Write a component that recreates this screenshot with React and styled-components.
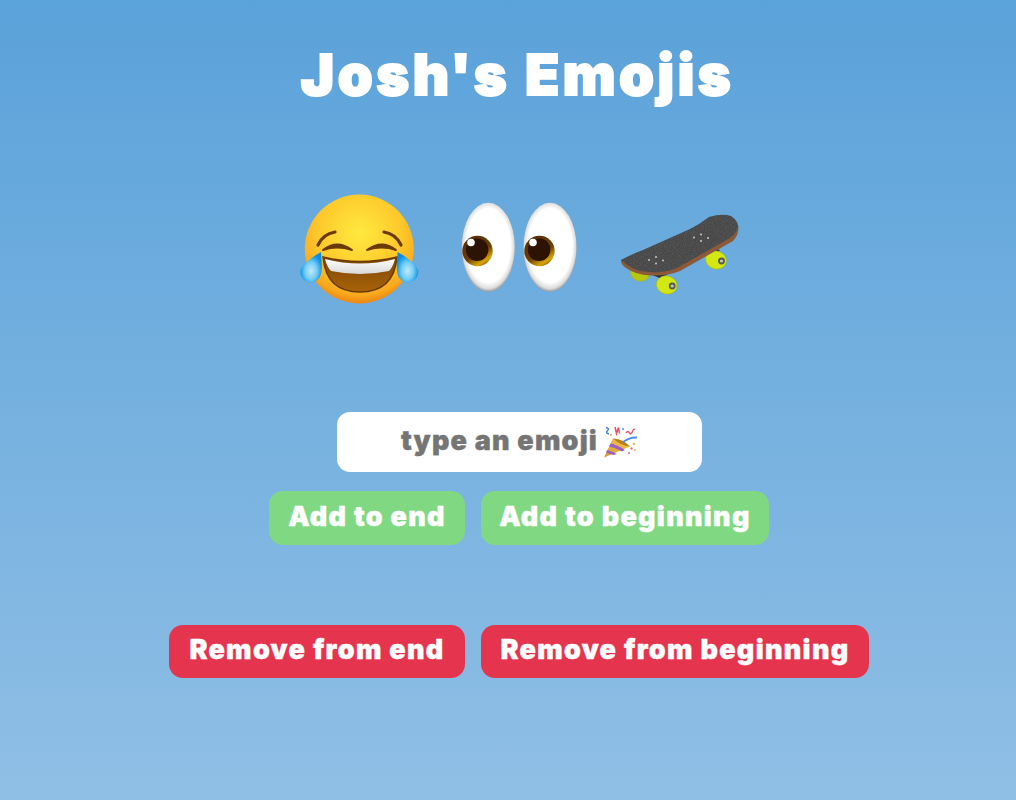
import React from "react";
import styled, { createGlobalStyle } from "styled-components";

const Global = createGlobalStyle`
  html, body { margin: 0; padding: 0; }
  body { font-family: "Inter", "Noto Sans", sans-serif; }
`;

const Page = styled.main`
  box-sizing: border-box;
  height: 800px;
  overflow: hidden;
  background: linear-gradient(180deg, #5aa2da 0%, #90bfe5 100%);
  display: flex;
  flex-direction: column;
  align-items: center;
`;

const Title = styled.h1`
  margin: 40px 0 0 19px;
  height: 70px;
  text-align: center;
  color: #fff;
  font-family: "Inter", sans-serif;
  font-weight: 900;
  font-size: 56px;
  line-height: 70px;
  letter-spacing: 3.5px;
  white-space: nowrap;
  -webkit-text-stroke: 2px #fff;
`;

const EmojiRow = styled.section`
  margin: 80px 0 0 24px;
  display: flex;
  gap: 40px;
  height: 120px;
`;

const EmojiArt = styled.svg`
  width: 120px;
  height: 120px;
  overflow: visible;
  display: block;
`;

const InputBox = styled.div`
  margin: 102px 0 0 23px;
  width: 365px;
  height: 60px;
  background: #fff;
  border-radius: 13px;
  display: flex;
  align-items: center;
  justify-content: center;
  gap: 4px;
  color: #757575;
  font-weight: 900;
  font-size: 27px;
  letter-spacing: 1.2px;
  -webkit-text-stroke: 0.4px #757575;
`;

const InputText = styled.span`
  padding-bottom: 4px;
`;

const Popper = styled.svg`
  width: 36px;
  height: 36px;
  display: block;
`;

const ButtonRow = styled.div`
  display: flex;
  gap: 16px;
  margin: ${(p) => p.$top}px 0 0 22px;
`;

const ActionButton = styled.button`
  box-sizing: border-box;
  width: ${(p) => p.$width}px;
  height: ${(p) => p.$height}px;
  padding: 0 0 4px;
  border: 0;
  border-radius: 14px;
  background: ${(p) => p.$bg};
  color: #fff;
  font-family: "Inter", sans-serif;
  font-weight: 900;
  font-size: 27px;
  letter-spacing: 1.3px;
  -webkit-text-stroke: 0.4px #fff;
  white-space: nowrap;
`;

const Laugh = () => (
  <EmojiArt viewBox="300 190 120 120" role="img" aria-label="laughing with tears">
    <defs>
      <radialGradient id="face" cx="50%" cy="35%" r="64%">
        <stop offset="0" stopColor="#ffe93f" />
        <stop offset="0.6" stopColor="#fdc92a" />
        <stop offset="0.9" stopColor="#f9a81d" />
        <stop offset="1" stopColor="#ee8a14" />
      </radialGradient>
      <radialGradient id="tear" cx="50%" cy="62%" r="55%">
        <stop offset="0" stopColor="#bfe9fb" />
        <stop offset="0.5" stopColor="#76cdf6" />
        <stop offset="0.85" stopColor="#1f9fea" />
        <stop offset="1" stopColor="#0c8de3" />
      </radialGradient>
      <linearGradient id="mouth" x1="0" y1="0" x2="0" y2="1">
        <stop offset="0" stopColor="#7a4405" />
        <stop offset="1" stopColor="#a96408" />
      </linearGradient>
      <linearGradient id="teeth" x1="0" y1="0" x2="0" y2="1">
        <stop offset="0" stopColor="#ffffff" />
        <stop offset="1" stopColor="#d8d8d8" />
      </linearGradient>
    </defs>
    <circle cx="359.3" cy="249" r="54.5" fill="url(#face)" />
    <path d="M318 245 Q323 234 335 232" fill="none" stroke="#6b3a06" strokeWidth="3.2" strokeLinecap="round" />
    <path d="M384 232 Q396 234 401 245" fill="none" stroke="#6b3a06" strokeWidth="3.2" strokeLinecap="round" />
    <path d="M323 250 Q337 239 352 250 Q337 245 323 250Z" fill="#6b3a06" stroke="#6b3a06" strokeWidth="2" strokeLinejoin="round" />
    <path d="M367 250 Q382 239 396 250 Q382 245 367 250Z" fill="#6b3a06" stroke="#6b3a06" strokeWidth="2" strokeLinejoin="round" />
    <path d="M323 257 Q360 266 397 257 Q394 292 360 292 Q326 292 323 257Z" fill="url(#mouth)" stroke="#6b3a06" strokeWidth="1.5" />
    <path d="M325 259 Q360 268 395 259 Q393 267 389 271 Q360 277 331 271 Q327 267 325 259Z" fill="url(#teeth)" />
    <path d="M321 252 C321.5 262 323 270 320 277 A10.5 10.5 0 0 1 300.5 270 C303 264 312 257 321 252Z" fill="url(#tear)" />
    <path d="M397.6 252 C397.1 262 395.6 270 398.6 277 A10.5 10.5 0 0 0 418.1 270 C415.6 264 406.6 257 397.6 252Z" fill="url(#tear)" />
  </EmojiArt>
);

const Eye = ({ cx, ix }) => (
  <g>
    <ellipse cx={cx} cy="247.3" rx="26.6" ry="44.5" fill="url(#sclera)" />
    <circle cx={ix} cy="251" r="15.2" fill="url(#iris)" />
    <circle cx={ix - 0.4} cy="249.8" r="11.3" fill="#2d1303" />
    <circle cx={ix - 6.5} cy="242.5" r="3.8" fill="#ffffff" />
  </g>
);

const Eyes = () => (
  <EmojiArt viewBox="460 190 120 120" role="img" aria-label="eyes">
    <defs>
      <radialGradient id="sclera" cx="50%" cy="48%" r="52%">
        <stop offset="0" stopColor="#ffffff" />
        <stop offset="0.8" stopColor="#ffffff" />
        <stop offset="0.93" stopColor="#dcdcdc" />
        <stop offset="1" stopColor="#9a9a9a" />
      </radialGradient>
      <linearGradient id="iris" x1="0.2" y1="0.1" x2="0.75" y2="1">
        <stop offset="0" stopColor="#5a2e05" />
        <stop offset="0.55" stopColor="#6e3f06" />
        <stop offset="0.85" stopColor="#d9a406" />
        <stop offset="1" stopColor="#8a5a06" />
      </linearGradient>
    </defs>
    <Eye cx={488.3} ix={477.5} />
    <Eye cx={550} ix={539.5} />
  </EmojiArt>
);

const Wheel = ({ cx, cy, hub, fill = "#d3e813", rx = 10.5, ry = 9 }) => (
  <g>
    <ellipse cx={cx} cy={cy} rx={rx} ry={ry} fill={fill} stroke="#a9b90c" strokeWidth="0.6" transform={`rotate(15 ${cx} ${cy})`} />
    {hub && <circle cx={cx + 5.5} cy={cy + 1} r="3.4" fill="#55584c" />}
    {hub && <circle cx={cx + 5.5} cy={cy + 1} r="1.6" fill="#c7c7c0" />}
  </g>
);

const Skateboard = () => (
  <EmojiArt viewBox="620 190 120 120" role="img" aria-label="skateboard">
    <defs>
      <filter id="grip" x="0" y="0" width="100%" height="100%" colorInterpolationFilters="sRGB">
        <feTurbulence type="fractalNoise" baseFrequency="1.1" numOctaves="1" seed="4" result="n" />
        <feColorMatrix in="n" type="matrix" values="0 0 0 0 1  0 0 0 0 1  0 0 0 0 1  0 0 0 0.22 -0.07" result="g" />
        <feComposite in="g" in2="SourceGraphic" operator="in" result="s" />
        <feMerge>
          <feMergeNode in="SourceGraphic" />
          <feMergeNode in="s" />
        </feMerge>
      </filter>
    </defs>
    <Wheel cx={640} cy={273} fill="#b7c90f" rx={9.5} ry={8} />
    <path d="M645 272 L662 279 L672 270 L655 266Z" fill="#333" />
    <path d="M700 252 L712 258 L720 250 L708 246Z" fill="#333" />
    <Wheel cx={716} cy={260} hub />
    <Wheel cx={666.7} cy={285} hub />
    <path
      d="M621 260 Q620.5 264 626 268 Q636 275 650 275.5 Q668 276 680 271 L733 241 Q739 235 738.5 226 L700 230 Z"
      fill="#8c5a38"
    />
    <path
      d="M621 260 Q632 254 643 250 L690 229 Q700 224 709 217 Q722 213 731 216 Q738 221 738 226 Q737 234 729 238.5 L678 267.5 Q668 272 654 272.5 L640 271 Q630 268 621 260Z"
      fill="#454545"
      filter="url(#grip)"
    />
    {[
      [649, 260], [656, 257], [663, 260.5], [656, 263.5],
      [694, 237.5], [701, 234.5], [708, 238], [701, 241],
    ].map(([x, y]) => (
      <circle key={`${x}-${y}`} cx={x} cy={y} r="1" fill="#c9c9c9" />
    ))}
  </EmojiArt>
);

const PartyPopper = () => (
  <Popper viewBox="603 421 36 36" role="img" aria-label="party popper">
    <defs>
      <linearGradient id="cone" x1="0" y1="1" x2="1" y2="0">
        <stop offset="0" stopColor="#d9962a" />
        <stop offset="1" stopColor="#f5cf4e" />
      </linearGradient>
    </defs>
    <path d="M605 454.5 L614 435.5 Q624 436 631 443.5 Z" fill="url(#cone)" />
    <path d="M611.5 440.5 Q619 442 626 447 L623 448.5 Q616 444.5 610 443.5Z" fill="#9a5fc9" />
    <path d="M608 447 Q613 448.5 618 451 L614.5 452 Q610 450.5 607 449.5Z" fill="#9a5fc9" />
    <path d="M614 435.5 Q624 436 631 443.5 Q622 443 614 435.5Z" fill="#b97f1f" />
    <path d="M607 424.5 q4 1 1.5 3.2 q-2.5 2.2 1.5 3.3" fill="none" stroke="#3f7fe0" strokeWidth="1.4" />
    <path d="M616 424 l1.5 6.5 l2 -6 l1 6" fill="none" stroke="#e8506a" strokeWidth="1.5" />
    <path d="M627 430 q2 -3 3.5 0 q1.5 2 3 -1.5 q1 -3 2.5 -2" fill="none" stroke="#e8506a" strokeWidth="1.4" />
    <path d="M624 439 Q631 434 638 434.5" fill="none" stroke="#4a8fe8" strokeWidth="1.9" />
    <circle cx="612" cy="432" r="1" fill="#e8a53a" />
    <circle cx="624" cy="426" r="1" fill="#4a8fe8" />
    <circle cx="635" cy="441" r="1.3" fill="#f0b060" />
    <circle cx="632.5" cy="445.5" r="1.2" fill="#e8708a" />
    <circle cx="636" cy="447" r="1" fill="#f0b060" />
    <circle cx="630" cy="450" r="1" fill="#e8708a" />
  </Popper>
);

export default function App() {
  return (
    <>
      <Global />
      <Page>
        <Title>Josh's Emojis</Title>
        <EmojiRow>
          <Laugh />
          <Eyes />
          <Skateboard />
        </EmojiRow>
        <InputBox role="textbox">
          <InputText>type an emoji</InputText>
          <PartyPopper />
        </InputBox>
        <ButtonRow $top={19}>
          <ActionButton $width={196} $height={54} $bg="#80d982">Add to end</ActionButton>
          <ActionButton $width={288} $height={54} $bg="#80d982">Add to beginning</ActionButton>
        </ButtonRow>
        <ButtonRow $top={80}>
          <ActionButton $width={296} $height={53} $bg="#e5344d">Remove from end</ActionButton>
          <ActionButton $width={388} $height={53} $bg="#e5344d">Remove from beginning</ActionButton>
        </ButtonRow>
      </Page>
    </>
  );
}
